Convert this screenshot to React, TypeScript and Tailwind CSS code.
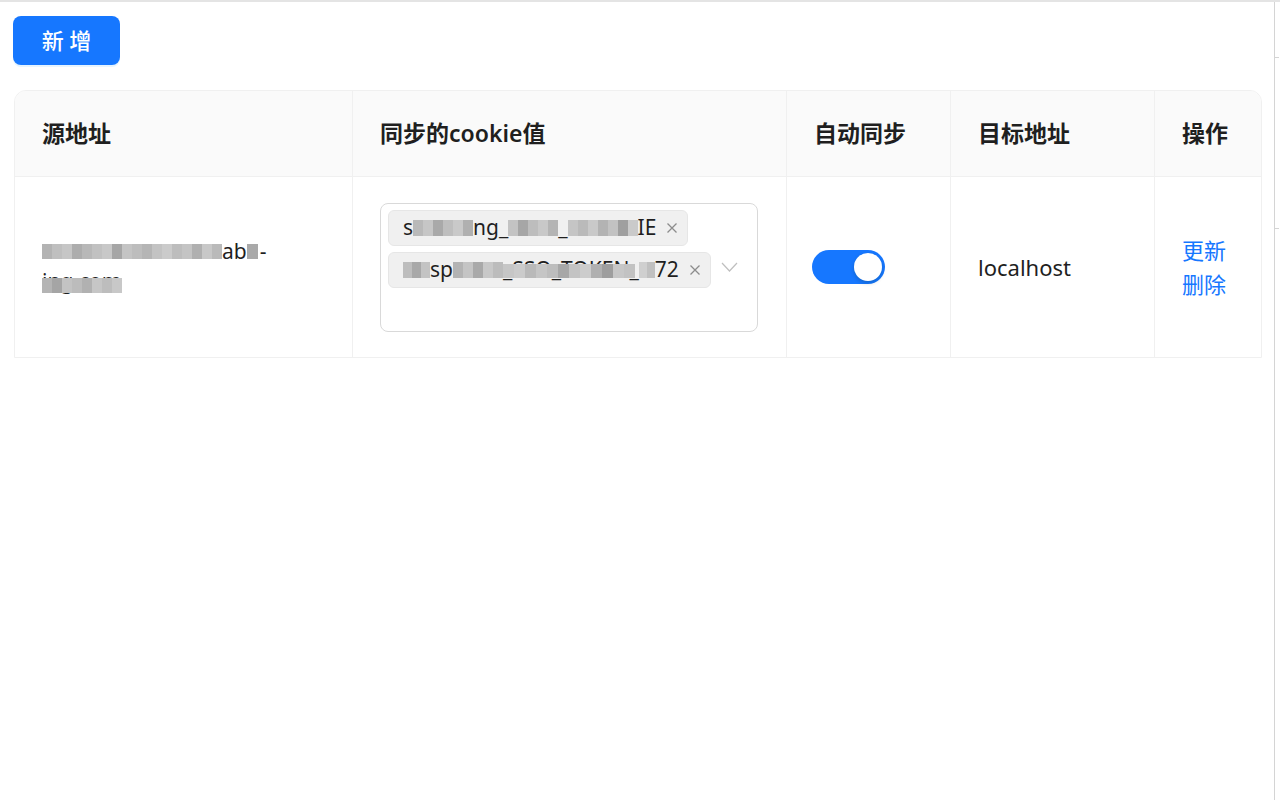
import React from "react";

// pixelated blocks that hide part of the text in the reference
function Mosaic({ cells, w = 10, h = 16 }: { cells: string[]; w?: number; h?: number }) {
  return (
    <span className="inline-flex align-middle" style={{ height: h }}>
      {cells.map((c, i) => (
        <span key={i} className="h-full" style={{ width: w, background: c }} />
      ))}
    </span>
  );
}

function Tag({ children }: { children: React.ReactNode }) {
  return (
    <div className="flex h-[36px] items-center rounded-[6px] border border-[#e6e6e6] bg-[#f0f0f0] pl-[14px] pr-[9px] text-[21px] leading-none text-[#1f1f1f]">
      <span className="flex items-center whitespace-nowrap">{children}</span>
      <svg className="ml-[10px] h-[12px] w-[12px] text-[#8c8c8c]" viewBox="0 0 12 12" fill="none" stroke="currentColor" strokeWidth="1.3">
        <path d="M1.5 1.5l9 9M10.5 1.5l-9 9" />
      </svg>
    </div>
  );
}

function CookieSelect() {
  return (
    <div className="relative flex h-[129px] w-[378px] flex-col items-start gap-[6px] rounded-[8px] border border-[#d9d9d9] bg-white px-[7px] pt-[6px]">
      <Tag>
        s
        <Mosaic cells={["#b9b9b9", "#c6c6c6", "#a9a9a9", "#bebebe", "#c9c9c9", "#b0b0b0"]} w={10} />
        ng_
        <Mosaic cells={["#c3c3c3", "#a6a6a6", "#bdbdbd", "#c8c8c8", "#b4b4b4"]} w={10} />
        _
        <Mosaic cells={["#c5c5c5", "#bababa", "#c9c9c9", "#b3b3b3", "#c2c2c2", "#9f9f9f", "#cacaca"]} w={10} />
        IE
      </Tag>
      <Tag>
        <Mosaic cells={["#bdbdbd", "#a8a8a8", "#c3c3c3"]} w={9} />
        sp
        <Mosaic cells={["#b3b3b3", "#c4c4c4", "#a9a9a9", "#c8c8c8", "#bcbcbc"]} w={10} />
        <span className="relative">
          _SSO_TOKEN_
          <span className="absolute inset-x-0 top-[5px] flex h-[14px]">
            <Mosaic cells={["#c6c6c6", "#cbcbcb", "#b9b9b9", "#c5c5c5", "#bdbdbd", "#a7a7a7", "#c3c3c3", "#cccccc", "#b0b0b0", "#9e9e9e", "#c7c7c7", "#c2c2c2"]} w={11} h={14} />
          </span>
        </span>
        <Mosaic cells={["#cfcfcf", "#c0c0c0"]} w={8} />
        72
      </Tag>
      <svg className="absolute right-[19px] top-1/2 h-[10px] w-[17px] -translate-y-1/2 text-[#bfbfbf]" viewBox="0 0 17 10" fill="none" stroke="currentColor" strokeWidth="1.2">
        <path d="M1 1l7.5 8L16 1" />
      </svg>
    </div>
  );
}

function Toggle() {
  return (
    <div className="-ml-[2px] flex h-[34px] w-[73px] items-center justify-end rounded-full bg-[#1677ff] px-[3px]">
      <div className="h-[28px] w-[28px] rounded-full bg-white shadow-[0_2px_4px_rgba(0,35,11,0.2)]" />
    </div>
  );
}

export default function App() {
  const cols = "grid grid-cols-[338px_434px_164px_204px_106px]";
  const th = "flex items-center border-r border-[#f0f0f0] px-[27px] text-[23px] font-semibold text-[#1f1f1f]";
  const td = "flex items-center border-r border-[#f0f0f0] px-[27px] text-[22px] text-[#1f1f1f]";

  return (
    <div className="flex h-[800px] w-full flex-col bg-white font-[family-name:'Noto_Sans','Noto_Sans_CJK_SC',sans-serif]">
      <div className="h-[2px] w-full bg-[#e4e4e4]" />
      <div className="flex flex-1">
        <div className="w-[1275px] border-r border-[#d4d4d4]">
          <button className="ml-[13px] mt-[14px] h-[49px] w-[107px] rounded-[8px] bg-[#1677ff] text-[22px] font-medium text-white shadow-[0_2px_0_rgba(5,145,255,0.1)]">
            新 增
          </button>

          <div className="ml-[14px] mt-[25px] w-[1248px] overflow-hidden rounded-t-[12px] border border-[#f0f0f0]">
            <div className={`${cols} h-[86px] border-b border-[#f0f0f0] bg-[#fafafa]`}>
              <div className={th}>源地址</div>
              <div className={th}>同步的cookie值</div>
              <div className={th}>自动同步</div>
              <div className={th}>目标地址</div>
              <div className={`${th} border-r-0`}>操作</div>
            </div>

            <div className={`${cols} h-[180px]`}>
              <div className={`${td} flex-col items-start justify-center`}>
                <div className="flex h-[31px] items-center">
                  <Mosaic cells={["#b3b3b3", "#bfbfbf", "#c6c6c6", "#adadad", "#b8b8b8", "#c1c1c1", "#c8c8c8", "#a6a6a6", "#c4c4c4", "#bdbdbd", "#b5b5b5", "#c3c3c3", "#cbcbcb", "#bdbdbd", "#c4c4c4", "#b0b0b0", "#c8c8c8", "#bababa"]} w={10} h={15} />
                  <span className="text-[21px]">ab</span>
                  <Mosaic cells={["#a9a9a9"]} w={11} h={15} />
                  <span className="ml-[2px] text-[21px]">-</span>
                </div>
                <div className="relative h-[31px] text-[21px] leading-[28px]">
                  ing.com
                  <span className="absolute left-0 top-[11px] flex">
                    <Mosaic cells={["#b4b4b4", "#a5a5a5", "#c3c3c3", "#bcbcbc", "#b1b1b1", "#c6c6c6", "#bdbdbd", "#c8c8c8"]} w={10} h={15} />
                  </span>
                </div>
              </div>
              <div className={td}>
                <CookieSelect />
              </div>
              <div className={td}>
                <Toggle />
              </div>
              <div className={td}>localhost</div>
              <div className={`${td} flex-col items-start justify-center border-r-0 leading-[34px] text-[#1677ff]`}>
                <a className="cursor-pointer">更新</a>
                <a className="cursor-pointer">删除</a>
              </div>
            </div>
          </div>
        </div>
        <div className="flex w-[4px] flex-col">
          <div className="mt-[55px] h-[1px] bg-[#d4d4d4]" />
          <div className="mt-[170px] h-[1px] bg-[#d4d4d4]" />
        </div>
      </div>
    </div>
  );
}
